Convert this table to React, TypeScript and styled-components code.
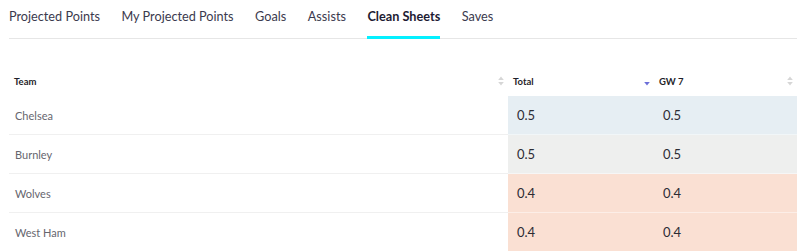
import React from "react";
import styled, { createGlobalStyle } from "styled-components";

const Global = createGlobalStyle`
  html, body { margin: 0; padding: 0; background: #ffffff; }
  body { font-family: "Lato", "Liberation Sans", sans-serif; }
`;

const Page = styled.div`
  width: 800px;
  height: 251px;
  overflow: hidden;
  box-sizing: border-box;
  padding: 0 3px 0 9px;
`;

const TabBar = styled.nav`
  display: flex;
  gap: 21.5px;
  height: 38px;
  border-bottom: 1px solid #e6e6e6;
`;

const Tab = styled.div<{ $active?: boolean }>`
  position: relative;
  display: flex;
  align-items: center;
  height: 32px;
  font-size: 12.7px;
  font-weight: ${(p) => (p.$active ? 700 : 400)};
  color: ${(p) => (p.$active ? "#1d1b33" : "#3b3a4e")};
  white-space: nowrap;
  &::after {
    content: "";
    position: absolute;
    left: 0;
    right: 0;
    bottom: -7px;
    height: 3px;
    background: ${(p) => (p.$active ? "#05f0ff" : "transparent")};
  }
`;

const Table = styled.div`
  margin-top: 27px;
  display: grid;
  grid-template-columns: 499px 146px 143px;
`;

const HeadCell = styled.div`
  display: flex;
  align-items: center;
  justify-content: space-between;
  height: 30px;
  padding: 0 4px 0 5px;
  box-sizing: border-box;
  font-size: 9.5px;
  font-weight: 700;
  color: #1f1f2a;
`;

const Cell = styled.div<{ $bg?: string; $team?: boolean }>`
  display: flex;
  align-items: center;
  height: 39px;
  box-sizing: border-box;
  border-bottom: 1px solid ${(p) => (p.$bg ? "rgba(255,255,255,0.45)" : "#f0f0f0")};
  background: ${(p) => p.$bg || "transparent"};
  padding-left: ${(p) => (p.$team ? "6px" : "9px")};
  font-size: ${(p) => (p.$team ? "11px" : "13px")};
  color: ${(p) => (p.$team ? "#66666e" : "#2c2c34")};
`;

const SortIcon = ({ active }: { active?: boolean }) => (
  <svg width="6" height="10" viewBox="0 0 6 10" style={{ flex: "none" }}>
    {!active && <path d="M3 0.5 L5.8 4 L0.2 4 Z" fill="#d6d6d6" />}
    <path d="M0.2 6 L5.8 6 L3 9.5 Z" fill={active ? "#6c6fd8" : "#d6d6d6"} />
  </svg>
);

const rows = [
  { team: "Chelsea", total: "0.5", gw: "0.5", bg: "#e6eef3" },
  { team: "Burnley", total: "0.5", gw: "0.5", bg: "#eeefee" },
  { team: "Wolves", total: "0.4", gw: "0.4", bg: "#fae0d3" },
  { team: "West Ham", total: "0.4", gw: "0.4", bg: "#fae0d3" },
];

const tabs = ["Projected Points", "My Projected Points", "Goals", "Assists", "Clean Sheets", "Saves"];

export default function App() {
  return (
    <Page>
      <Global />
      <TabBar>
        {tabs.map((t) => (
          <Tab key={t} $active={t === "Clean Sheets"}>
            {t}
          </Tab>
        ))}
      </TabBar>
      <Table>
        <HeadCell>
          <span>Team</span>
          <SortIcon />
        </HeadCell>
        <HeadCell>
          <span>Total</span>
          <SortIcon active />
        </HeadCell>
        <HeadCell>
          <span>GW 7</span>
          <SortIcon />
        </HeadCell>
        {rows.map((r) => (
          <React.Fragment key={r.team}>
            <Cell $team>{r.team}</Cell>
            <Cell $bg={r.bg}>{r.total}</Cell>
            <Cell $bg={r.bg}>{r.gw}</Cell>
          </React.Fragment>
        ))}
      </Table>
    </Page>
  );
}
